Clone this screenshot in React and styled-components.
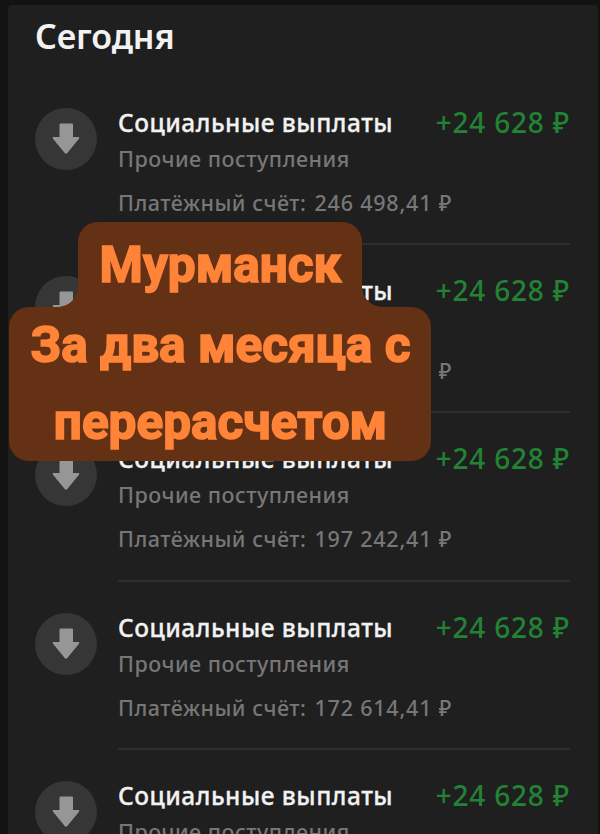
import styled, { createGlobalStyle } from 'styled-components';

const GlobalStyle = createGlobalStyle`
  * {
    box-sizing: border-box;
  }

  body {
    margin: 0;
    overflow: hidden;
    background: #121212;
    font-family: 'Noto Sans', 'Open Sans', sans-serif;
  }
`;

const Screen = styled.div`
  position: relative;
  width: 600px;
  height: 834px;
  padding: 5px 2px 0 8px;
  overflow: hidden;
  background: #121212;
`;

const Panel = styled.main`
  height: 829px;
  padding: 0 28px 0 27px;
  overflow: hidden;
  border-radius: 4px 4px 0 0;
  background: #1f1f1f;
`;

const DayTitle = styled.h1`
  height: 72px;
  margin: 0;
  padding-top: 11px;
  color: #f2f2f2;
  font-size: 34px;
  font-weight: 600;
  letter-spacing: -0.1px;
  line-height: 40px;
  white-space: nowrap;
`;

const Operation = styled.article`
  display: flex;
  gap: 21px;
  height: 168.2px;
  padding-top: 31px;
`;

const IconCircle = styled.div`
  display: flex;
  flex: none;
  align-items: center;
  justify-content: center;
  width: 62px;
  height: 62px;
  border-radius: 50%;
  background: #363636;
`;

const Details = styled.div`
  flex: 1;
  height: 137.2px;
  border-bottom: 2px solid #2d2d2d;
`;

const TitleRow = styled.div`
  display: flex;
  justify-content: space-between;
  height: 29px;
  line-height: 29px;
  white-space: nowrap;
`;

const Title = styled.span`
  color: #f2f2f2;
  font-size: 24.5px;
  font-weight: 500;
  letter-spacing: 0.5px;
  -webkit-text-stroke: 0.3px #f2f2f2;
`;

const Amount = styled.span`
  color: #228335;
  font-size: 28px;
  font-weight: 500;
  letter-spacing: 0.8px;
`;

const Note = styled.p`
  height: 28px;
  margin: ${({ $gap }) => $gap}px 0 0;
  color: #777;
  font-size: 21.5px;
  font-weight: 500;
  letter-spacing: 0.5px;
  line-height: 28px;
  white-space: nowrap;
`;

const Balance = styled.span`
  margin-left: 2px;
  letter-spacing: 0.8px;
`;

const Caption = styled.div`
  position: absolute;
  top: 222px;
  left: 9px;
  display: flex;
  flex-direction: column;
  align-items: center;
  width: 422px;
  color: #ff8438;
  font-family: Roboto, sans-serif;
  font-size: 49.5px;
  font-weight: 700;
  line-height: 77px;
  text-align: center;
  white-space: nowrap;
  -webkit-text-stroke: 1.6px #ff8438;
`;

const CaptionTop = styled.div`
  position: relative;
  width: 284px;
  height: 85px;
  padding: 5px 0 0 1px;
  border-radius: 20px 20px 0 0;
  background: #643114;

  &::before,
  &::after {
    position: absolute;
    bottom: 0;
    width: 20px;
    height: 20px;
    content: '';
  }

  &::before {
    right: 100%;
    background: radial-gradient(circle at 0 0, transparent 19.5px, #643114 20px);
  }

  &::after {
    left: 100%;
    background: radial-gradient(circle at 100% 0, transparent 19.5px, #643114 20px);
  }
`;

const CaptionBottom = styled.div`
  width: 422px;
  height: 154px;
  padding-left: 1px;
  border-radius: 20px;
  background: #643114;
`;

const CaptionLine = styled.div`
  height: 77px;
`;

const balances = ['246 498,41 ₽', '221 870,41 ₽', '197 242,41 ₽', '172 614,41 ₽', '147 986,41 ₽'];

function ArrowDown() {
  return (
    <svg width="28" height="32" viewBox="0 0 28 32" fill="#969696">
      <path d="M7.5 1.5Q7.5 .5 8.5 .5H20Q21 .5 21 1.5V14H26.5Q28 14.3 27 15.8L15.3 30Q14 31.4 12.7 30L1 15.8Q0 14.3 1.5 14H7.5Z" />
    </svg>
  );
}

function OperationItem({ balance }) {
  return (
    <Operation>
      <IconCircle>
        <ArrowDown />
      </IconCircle>
      <Details>
        <TitleRow>
          <Title>Социальные выплаты</Title>
          <Amount>+24 628 ₽</Amount>
        </TitleRow>
        <Note $gap={8}>Прочие поступления</Note>
        <Note $gap={16}>
          Платёжный счёт: <Balance>{balance}</Balance>
        </Note>
      </Details>
    </Operation>
  );
}

export default function App() {
  return (
    <>
      <GlobalStyle />
      <Screen>
        <Panel>
          <DayTitle>Сегодня</DayTitle>
          {balances.map((balance) => (
            <OperationItem key={balance} balance={balance} />
          ))}
        </Panel>
        <Caption>
          <CaptionTop>
            <CaptionLine>Мурманск</CaptionLine>
          </CaptionTop>
          <CaptionBottom>
            <CaptionLine>За два месяца с</CaptionLine>
            <CaptionLine>перерасчетом</CaptionLine>
          </CaptionBottom>
        </Caption>
      </Screen>
    </>
  );
}
